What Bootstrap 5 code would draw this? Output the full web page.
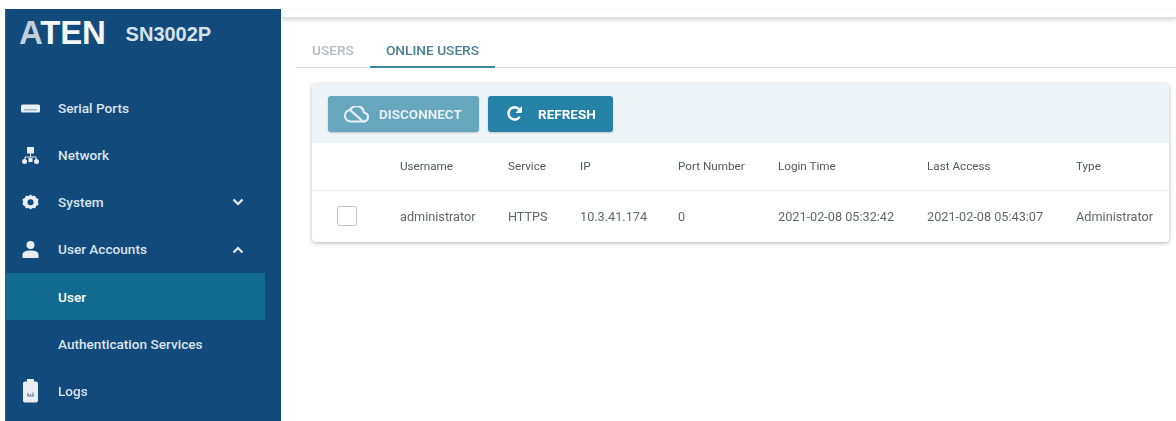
<!DOCTYPE html>
<html lang="en">
<head>
<meta charset="utf-8">
<title>SN3002P</title>
<link href="https://cdn.jsdelivr.net/npm/bootstrap@5.3.0/dist/css/bootstrap.min.css" rel="stylesheet">
<style>
html,body{height:421px;overflow:hidden;background:#fff;font-family:Roboto,"Liberation Sans",sans-serif}
.shell{padding:9px 0 0 5px;height:421px;filter:blur(.6px)}
.side{width:276px;flex:none;background:#134a7c;color:#e6eef5;border-left:1px solid #2a5f90}
.brand{height:75.500px;padding:11px 0 0 13px;flex:none}
.brand-name{font:700 33px/26px "Liberation Sans",sans-serif;color:#f4f7fa;letter-spacing:-.2px}
.brand-lead{color:#c3d0dc}
.brand-model{font:700 20px/26px "Liberation Sans",sans-serif;color:#d6e2ec;margin:1px 0 0 20px}
.side-item{height:47.200px;flex:none;padding-left:16px;padding-right:37px;font-size:13.600px;font-weight:500;color:#d9e4ee;text-decoration:none}
.side-item svg.ico{width:17px;height:17px;flex:none;margin-right:19px;overflow:visible}
.side-sub{padding-left:52px;margin-right:16px}
.side-on{background:#126a90;color:#fff}
.chev{width:12px;height:8px;margin-left:auto}
.main-area{min-width:0}
.topline{height:9px;margin-left:1px;border-bottom:1px solid #dcdfe1;box-shadow:0 2px 4px rgba(0,0,0,.16);flex:none}
.tabline{margin:15px 0 0 15px;height:35px;border-bottom:1px solid #dfe3e6;flex:none}
.tab-x{font-size:13.700px;font-weight:500;padding:0 16px;line-height:34px;height:35px;text-decoration:none;color:#b4bcc2}
.tab-on{color:#4b7f97;border-bottom:2px solid #3c8aa6}
.panel{margin:16px 7px 0 31px;border-radius:4px;box-shadow:0 1px 4px rgba(0,0,0,.3);background:#fff;overflow:hidden}
.tools{height:59px;background:#eef5f8;padding:12px 16px;gap:9px}
.act{height:36px;border:0;border-radius:3px;color:#fff;font-size:13.500px;font-weight:700;padding:0;display:flex;align-items:center;box-shadow:0 1px 2px rgba(0,0,0,.2)}
.act svg{flex:none}
.act-off{background:#66a7bf;width:151px;color:#e4f0f5}
.act-main{background:#2581a6;width:125px}
.ico-cloud{margin:0 10px 0 15px}
.ico-redo{margin:0 15px 0 18px}
.grid-t{table-layout:fixed;margin:0;font-size:12.700px;color:#5f6468}
.grid-t th{font-weight:400;height:47px;vertical-align:middle;padding:2px 0 0;border-bottom:1px solid #edeff0;color:#54585c;font-size:11.700px}
.grid-t td{height:52px;vertical-align:middle;padding:0;border:0;color:#62676b}
.box{display:block;width:20px;height:20px;margin-left:25px;border:1px solid #c4c7c9;border-radius:2px}
</style>
</head>
<body class="m-0">
<div class="shell d-flex">
  <nav class="side d-flex flex-column">
    <div class="brand d-flex align-items-start">
      <span class="brand-name"><span class="brand-lead">A</span>TEN</span><span class="brand-model">SN3002P</span>
    </div>
    <a class="side-item d-flex align-items-center" href="#">
      <svg class="ico" viewBox="0 0 17 17"><rect x="-1" y="4.500" width="19" height="8" rx="1.500" fill="#e8eef4"/><rect x="2" y="9" width="13" height="1.500" fill="#9fb6cb"/></svg>Serial Ports</a>
    <a class="side-item d-flex align-items-center" href="#">
      <svg class="ico" viewBox="0 0 17 17"><rect x="5" y="0" width="7" height="6.500" fill="#e8eef4"/><path d="M8.500 6v4M3 13V10h11v3" stroke="#e8eef4" fill="none"/><circle cx="2.500" cy="14.500" r="2.500" fill="#e8eef4"/><circle cx="14.500" cy="14.500" r="2.500" fill="#e8eef4"/><rect x="6.500" y="11" width="4" height="4" fill="#e8eef4"/></svg>Network</a>
    <a class="side-item d-flex align-items-center" href="#">
      <svg class="ico" viewBox="0 0 17 17"><path d="M8.500 0.500l2 1.500 2.600-.3 1.200 2.300 2.200 1.300-.5 2.700.5 2.700-2.200 1.300-1.200 2.300-2.600-.3-2 1.500-2-1.500-2.600.3-1.200-2.300L.5 10.700l.5-2.700-.5-2.700 2.200-1.300 1.200-2.300 2.600.3z" fill="#e8eef4"/><circle cx="8.500" cy="8.200" r="3" fill="#134a7c"/></svg>System
      <svg class="chev" viewBox="0 0 12 8"><path d="M1.500 1.500L6 6l4.500-4.500" stroke="#e8eef4" stroke-width="2.200" fill="none"/></svg></a>
    <a class="side-item d-flex align-items-center" href="#">
      <svg class="ico" viewBox="0 0 17 17"><circle cx="8.500" cy="4" r="4" fill="#e8eef4"/><path d="M0.500 17v-3C0.500 10.500 4 9.500 8.500 9.500s8 1 8 4.500v3z" fill="#e8eef4"/></svg>User Accounts
      <svg class="chev" viewBox="0 0 12 8"><path d="M1.500 6.500L6 2l4.500 4.500" stroke="#e8eef4" stroke-width="2.200" fill="none"/></svg></a>
    <a class="side-item side-sub side-on d-flex align-items-center" href="#">User</a>
    <a class="side-item side-sub d-flex align-items-center" href="#">Authentication Services</a>
    <a class="side-item d-flex align-items-center" href="#">
      <svg class="ico" viewBox="0 0 17 17"><rect x="1" y="-1.500" width="15" height="21" rx="2" fill="#e8eef4"/><rect x="5" y="-4" width="7" height="3" fill="#e8eef4"/><path d="M5 13h7M6 10v3M8.500 11v2M11 9.500V13" stroke="#6d8299" stroke-width="1.200"/></svg>Logs</a>
  </nav>
  <main class="main-area flex-grow-1 d-flex flex-column">
    <div class="topline"></div>
    <div class="tabline d-flex">
      <a class="tab-x" href="#">USERS</a>
      <a class="tab-x tab-on" href="#">ONLINE USERS</a>
    </div>
    <section class="panel">
      <div class="tools d-flex">
        <button class="act act-off" type="button">
          <svg class="ico-cloud" width="26" height="17" viewBox="0 0 26 17"><path d="M7 15.500h13a4.500 4.500 0 0 0 1-9 7.500 7.500 0 0 0-14-2.500 5.800 5.800 0 0 0 0 11.500zM6 3l14 12.500" stroke="#e4f0f5" stroke-width="2.200" fill="none"/></svg>DISCONNECT</button>
        <button class="act act-main" type="button">
          <svg class="ico-redo" width="17" height="16" viewBox="0 0 18 17"><path d="M14.500 11.500A6.500 6.500 0 1 1 14 3.500" stroke="#fff" stroke-width="2.600" fill="none"/><polygon points="17,0 17,7.500 10,7.500" fill="#fff"/></svg>REFRESH</button>
      </div>
      <table class="table grid-t">
        <colgroup><col style="width:88px"><col style="width:108px"><col style="width:72px"><col style="width:98px"><col style="width:100px"><col style="width:149px"><col style="width:149px"><col></colgroup>
        <thead><tr><th></th><th>Username</th><th>Service</th><th>IP</th><th>Port Number</th><th>Login Time</th><th>Last Access</th><th>Type</th></tr></thead>
        <tbody><tr><td><span class="box"></span></td><td>administrator</td><td>HTTPS</td><td>10.3.41.174</td><td>0</td><td>2021-02-08 05:32:42</td><td>2021-02-08 05:43:07</td><td>Administrator</td></tr></tbody>
      </table>
    </section>
  </main>
</div>
<script src="https://cdn.jsdelivr.net/npm/bootstrap@5.3.0/dist/js/bootstrap.bundle.min.js"></script>
</body>
</html>
